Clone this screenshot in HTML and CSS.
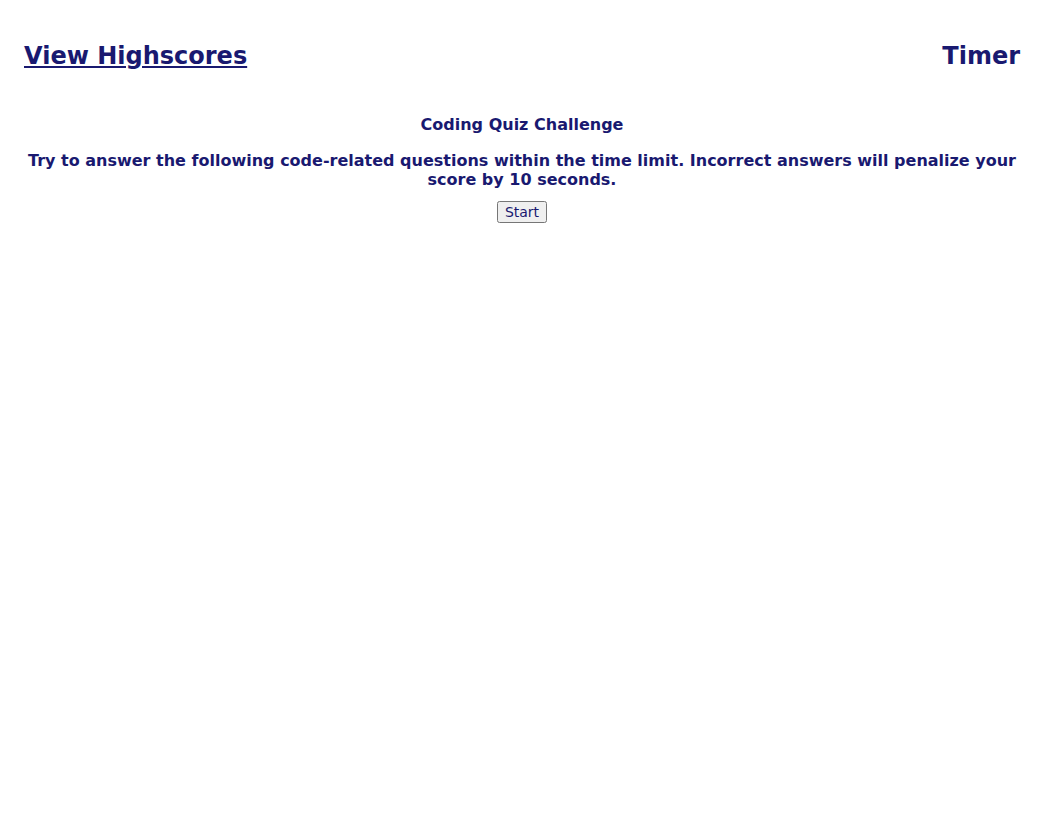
FILE: index.html
```html
<!DOCTYPE html>
<html>
<head>
<meta charset="utf-8">
<link rel="stylesheet" href="styles.css">
</head>
<body>
<header class="top">
  <a class="scores" href="#">View Highscores</a>
  <span class="timer">Timer</span>
</header>
<main class="intro">
  <h2 class="title">Coding Quiz Challenge</h2>
  <p class="desc">Try to answer the following code-related questions within the time limit. Incorrect answers will penalize your score by 10 seconds.</p>
  <button class="start">Start</button>
</main>
</body>
</html>
```
FILE: styles.css
```css
body {
  margin: 8px;
  font-family: Verdana, "DejaVu Sans", sans-serif;
  color: #191970;
  background: #fff;
}
.top {
  display: flex;
  justify-content: space-between;
  align-items: center;
  padding: 31px 16px 0 16px;
  font-size: 24px;
  font-weight: bold;
  line-height: 34px;
}
.scores {
  color: #191970;
  text-decoration: underline;
}
.intro {
  text-align: center;
  padding-top: 42px;
}
.title {
  font-size: 16px;
  margin: 0;
  line-height: 20px;
}
.desc {
  font-size: 16px;
  font-weight: bold;
  line-height: 19px;
  margin: 16px 0 12px;
}
.start {
  font-family: Verdana, "DejaVu Sans", sans-serif;
  font-size: 14px;
  color: #191970;
  padding: 1px 6px;
}
```
